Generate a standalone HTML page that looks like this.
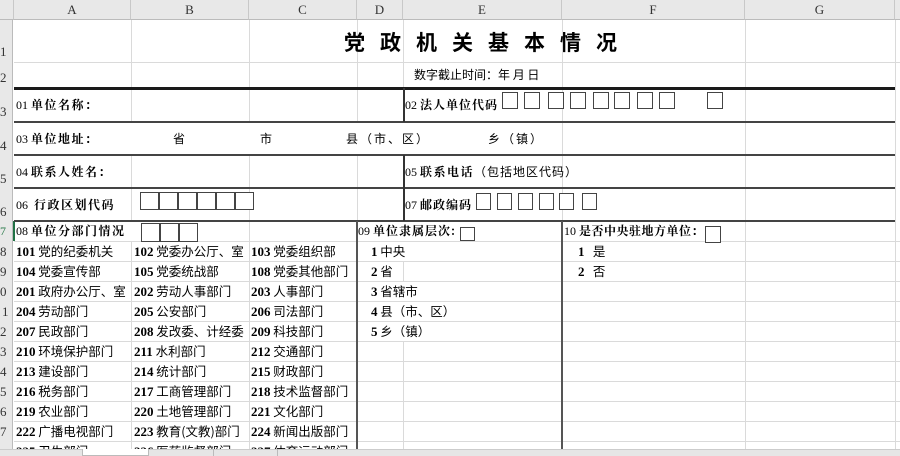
<!DOCTYPE html>
<html><head><meta charset="utf-8"><style>
*{margin:0;padding:0;box-sizing:border-box}
html,body{width:900px;height:456px;overflow:hidden}
body{background:#fff;position:relative;font-family:"Liberation Serif","Noto Serif CJK SC","Noto Sans CJK SC",serif;color:#000}
.a{position:absolute}
.hl{position:absolute;height:1px;background:#dadada}
.vl{position:absolute;width:1px;background:#dadada}
.H{position:absolute;height:2px;background:#1a1a1a}
.V{position:absolute;width:2px;background:#333}
.t{position:absolute;font-size:12px;white-space:nowrap;line-height:20px;height:20px}
.b{font-weight:bold;letter-spacing:1.5px;font-family:"Noto Serif CJK SC","Liberation Serif",serif}
.n{font-family:"Liberation Serif",serif;font-size:12px;letter-spacing:0}
.bx{position:absolute;border:1.5px solid #444;background:#fff}
.ch{position:absolute;top:0;height:20px;background:#e8e8e8;border-right:1px solid #c8c8c8;border-bottom:1px solid #bbb;font-size:13px;text-align:center;line-height:20px;color:#333;font-family:"Liberation Serif",serif}
.rh{position:absolute;left:0;width:13px;background:#e8e8e8;border-right:1px solid #bbb;font-size:13px;color:#333;overflow:hidden;text-align:right;font-family:"Liberation Serif",serif}
.s{font-family:"Noto Sans CJK SC",sans-serif}
.col{position:absolute;font-family:"Noto Sans CJK SC",sans-serif;font-size:12.5px;white-space:nowrap}
.col div{height:20px;line-height:20px;overflow:visible}
.col b{font-family:"Liberation Serif",serif;font-size:13px}
</style></head><body>
<div class="ch" style="left:0;width:14px"></div>
<div class="ch" style="left:14px;width:117px">A</div>
<div class="ch" style="left:131px;width:118px">B</div>
<div class="ch" style="left:249px;width:108px">C</div>
<div class="ch" style="left:357px;width:46px">D</div>
<div class="ch" style="left:403px;width:159px">E</div>
<div class="ch" style="left:562px;width:183px">F</div>
<div class="ch" style="left:745px;width:150px">G</div>
<div class="ch" style="left:895px;width:10px"></div>
<div class="rh" style="top:20px;height:436px"></div>
<div class="a" style="left:0;top:44px;font-size:13px;color:#333">1</div>
<div class="a" style="left:0;top:70px;font-size:13px;color:#333">2</div>
<div class="a" style="left:0;top:104px;font-size:13px;color:#333">3</div>
<div class="a" style="left:0;top:138px;font-size:13px;color:#333">4</div>
<div class="a" style="left:0;top:171px;font-size:13px;color:#333">5</div>
<div class="a" style="left:0;top:204px;font-size:13px;color:#333">6</div>
<div class="a" style="left:0;top:224px;font-size:12px;color:#2a7a4a">7</div>
<div class="a" style="left:0;top:244px;font-size:13px;color:#333">8</div>
<div class="a" style="left:0;top:264px;font-size:13px;color:#333">9</div>
<div class="a" style="left:0;top:284px;font-size:13px;color:#333">0</div>
<div class="a" style="left:2px;top:304px;font-size:13px;color:#333">1</div>
<div class="a" style="left:0;top:324px;font-size:13px;color:#333">2</div>
<div class="a" style="left:0;top:344px;font-size:13px;color:#333">3</div>
<div class="a" style="left:0;top:364px;font-size:13px;color:#333">4</div>
<div class="a" style="left:0;top:384px;font-size:13px;color:#333">5</div>
<div class="a" style="left:0;top:404px;font-size:13px;color:#333">6</div>
<div class="a" style="left:0;top:424px;font-size:13px;color:#333">7</div>
<div class="a" style="left:13px;top:221px;width:2px;height:20px;background:#217346"></div>
<div class="hl" style="left:14px;top:62px;width:890px"></div>
<div class="vl" style="left:131px;top:20px;height:68px"></div>
<div class="vl" style="left:249px;top:20px;height:68px"></div>
<div class="vl" style="left:357px;top:20px;height:68px"></div>
<div class="vl" style="left:403px;top:20px;height:68px"></div>
<div class="vl" style="left:562px;top:20px;height:430px"></div>
<div class="vl" style="left:745px;top:20px;height:430px"></div>
<div class="vl" style="left:895px;top:20px;height:430px"></div>
<div class="vl" style="left:131px;top:88px;height:33px"></div>
<div class="vl" style="left:249px;top:88px;height:33px"></div>
<div class="vl" style="left:357px;top:88px;height:33px"></div>
<div class="vl" style="left:131px;top:155px;height:66px"></div>
<div class="vl" style="left:249px;top:155px;height:66px"></div>
<div class="vl" style="left:357px;top:155px;height:66px"></div>
<div class="vl" style="left:131px;top:241px;height:210px"></div>
<div class="vl" style="left:249px;top:221px;height:230px"></div>
<div class="vl" style="left:403px;top:261px;height:20px"></div>
<div class="vl" style="left:403px;top:341px;height:110px"></div>
<div class="hl" style="left:14px;top:241px;width:890px"></div>
<div class="hl" style="left:14px;top:261px;width:890px"></div>
<div class="hl" style="left:14px;top:281px;width:890px"></div>
<div class="hl" style="left:14px;top:301px;width:890px"></div>
<div class="hl" style="left:14px;top:321px;width:890px"></div>
<div class="hl" style="left:14px;top:341px;width:890px"></div>
<div class="hl" style="left:14px;top:361px;width:890px"></div>
<div class="hl" style="left:14px;top:381px;width:890px"></div>
<div class="hl" style="left:14px;top:401px;width:890px"></div>
<div class="hl" style="left:14px;top:421px;width:890px"></div>
<div class="hl" style="left:14px;top:441px;width:890px"></div>
<div class="H" style="left:14px;top:87px;width:881px;height:2.5px"></div>
<div class="H" style="left:14px;top:121px;width:881px;height:1.5px;background:#444"></div>
<div class="H" style="left:14px;top:154px;width:881px;height:1.5px;background:#444"></div>
<div class="H" style="left:14px;top:187px;width:881px;height:1.5px;background:#444"></div>
<div class="H" style="left:14px;top:220px;width:881px;height:1.5px;background:#444"></div>
<div class="V" style="left:403px;top:88px;height:34px;width:1.5px"></div>
<div class="V" style="left:403px;top:155px;height:66px;width:1.5px"></div>
<div class="V" style="left:356px;top:221px;height:230px;width:1.5px;background:#555"></div>
<div class="V" style="left:561px;top:221px;height:230px;width:1.5px;background:#555"></div>
<div class="a" style="left:344px;top:29px;font-size:21px;font-weight:bold;letter-spacing:15px;font-family:'Noto Sans CJK SC',sans-serif;line-height:26px;white-space:nowrap">党政机关基本情况</div>
<div class="t s" style="left:414px;top:65px;font-size:12px">数字截止时间：年 月 日</div>
<div class="t" style="left:16px;top:95px"><span class="n">01</span> <span class="b">单位名称：</span></div>
<div class="t" style="left:405px;top:95px"><span class="n">02</span> <span class="b" style="letter-spacing:1px">法人单位代码</span></div>
<div class="t" style="left:16px;top:129px"><span class="n">03</span> <span class="b">单位地址：</span></div>
<div class="t s" style="left:173px;top:129px">省</div>
<div class="t s" style="left:260px;top:129px">市</div>
<div class="t s" style="left:346px;top:129px;letter-spacing:2px">县（市、区）</div>
<div class="t s" style="left:488px;top:129px;letter-spacing:2px">乡（镇）</div>
<div class="t" style="left:16px;top:162px"><span class="n">04</span> <span class="b">联系人姓名：</span></div>
<div class="t" style="left:405px;top:162px"><span class="n">05</span> <span class="b">联系电话</span><span class="s" style="letter-spacing:1px">（包括地区代码）</span></div>
<div class="t" style="left:16px;top:195px"><span class="n">06</span>&nbsp; <span class="b">行政区划代码</span></div>
<div class="t" style="left:405px;top:195px"><span class="n">07</span> <span class="b" style="letter-spacing:1px">邮政编码</span></div>
<div class="bx" style="left:140px;top:192px;width:19px;height:18px"></div>
<div class="bx" style="left:159px;top:192px;width:19px;height:18px"></div>
<div class="bx" style="left:178px;top:192px;width:19px;height:18px"></div>
<div class="bx" style="left:197px;top:192px;width:19px;height:18px"></div>
<div class="bx" style="left:216px;top:192px;width:19px;height:18px"></div>
<div class="bx" style="left:235px;top:192px;width:19px;height:18px"></div>
<div class="bx" style="left:141px;top:223px;width:19px;height:19px"></div>
<div class="bx" style="left:160px;top:223px;width:19px;height:19px"></div>
<div class="bx" style="left:179px;top:223px;width:19px;height:19px"></div>
<div class="bx" style="left:502px;top:92px;width:16px;height:17px"></div>
<div class="bx" style="left:524px;top:92px;width:16px;height:17px"></div>
<div class="bx" style="left:548px;top:92px;width:16px;height:17px"></div>
<div class="bx" style="left:570px;top:92px;width:16px;height:17px"></div>
<div class="bx" style="left:593px;top:92px;width:16px;height:17px"></div>
<div class="bx" style="left:614px;top:92px;width:16px;height:17px"></div>
<div class="bx" style="left:637px;top:92px;width:16px;height:17px"></div>
<div class="bx" style="left:659px;top:92px;width:16px;height:17px"></div>
<div class="bx" style="left:707px;top:92px;width:16px;height:17px"></div>
<div class="bx" style="left:476px;top:193px;width:15px;height:17px"></div>
<div class="bx" style="left:497px;top:193px;width:15px;height:17px"></div>
<div class="bx" style="left:518px;top:193px;width:15px;height:17px"></div>
<div class="bx" style="left:539px;top:193px;width:15px;height:17px"></div>
<div class="bx" style="left:559px;top:193px;width:15px;height:17px"></div>
<div class="bx" style="left:582px;top:193px;width:15px;height:17px"></div>
<div class="t" style="left:16px;top:221px"><span class="n">08</span> <span class="b">单位分部门情况</span></div>
<div class="t" style="left:358px;top:221px"><span class="n">09</span> <span class="b" style="letter-spacing:1px">单位隶属层次:</span></div>
<div class="t" style="left:564px;top:221px"><span class="n">10</span> <span class="b" style="letter-spacing:0.5px">是否中央驻地方单位：</span></div>
<div class="bx" style="left:460px;top:227px;width:15px;height:14px"></div>
<div class="bx" style="left:705px;top:226px;width:16px;height:17px"></div>
<div class="col" style="left:16px;top:241px">
<div><b>101</b> 党的纪委机关</div><div><b>104</b> 党委宣传部</div><div><b>201</b> 政府办公厅、室</div><div><b>204</b> 劳动部门</div><div><b>207</b> 民政部门</div><div><b>210</b> 环境保护部门</div><div><b>213</b> 建设部门</div><div><b>216</b> 税务部门</div><div><b>219</b> 农业部门</div><div><b>222</b> 广播电视部门</div><div><b>225</b> 卫生部门</div></div>
<div class="col" style="left:134px;top:241px">
<div><b>102</b> 党委办公厅、室</div><div><b>105</b> 党委统战部</div><div><b>202</b> 劳动人事部门</div><div><b>205</b> 公安部门</div><div><b>208</b> 发改委、计经委</div><div><b>211</b> 水利部门</div><div><b>214</b> 统计部门</div><div><b>217</b> 工商管理部门</div><div><b>220</b> 土地管理部门</div><div><b>223</b> 教育(文教)部门</div><div><b>226</b> 医药监督部门</div></div>
<div class="col" style="left:251px;top:241px">
<div><b>103</b> 党委组织部</div><div><b>108</b> 党委其他部门</div><div><b>203</b> 人事部门</div><div><b>206</b> 司法部门</div><div><b>209</b> 科技部门</div><div><b>212</b> 交通部门</div><div><b>215</b> 财政部门</div><div><b>218</b> 技术监督部门</div><div><b>221</b> 文化部门</div><div><b>224</b> 新闻出版部门</div><div><b>227</b> 体育运动部门</div></div>
<div class="col" style="left:371px;top:241px">
<div><b>1</b> 中央</div><div><b>2</b> 省</div><div><b>3</b> 省辖市</div><div><b>4</b> 县（市、区）</div><div><b>5</b> 乡（镇）</div></div>
<div class="col" style="left:578px;top:241px">
<div><b>1</b>&nbsp;&nbsp; 是</div><div><b>2</b>&nbsp;&nbsp; 否</div></div>
<div class="a" style="left:0;top:449px;width:900px;height:7px;background:#e6e6e6;border-top:1px solid #ccc"></div>
<div class="a" style="left:82px;top:449px;width:67px;height:7px;background:#fff;border:1px solid #bbb;border-top:none"></div>
<div class="a" style="left:213px;top:449px;width:65px;height:7px;border-left:1px solid #bbb;border-right:1px solid #bbb"></div>
</body></html>
